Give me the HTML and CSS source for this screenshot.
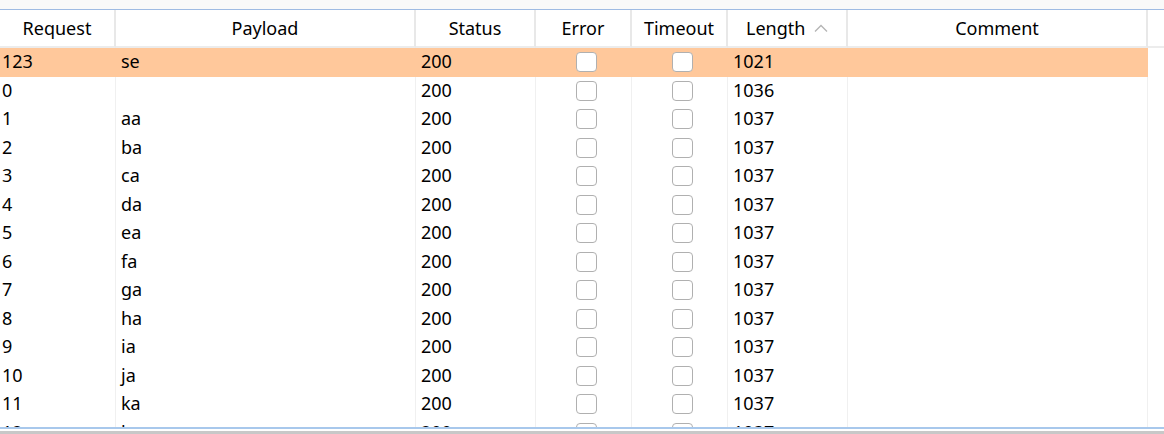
FILE: index.html
```html
<!DOCTYPE html>
<html lang="en">
<head>
    <meta charset="UTF-8">
    <title>Intruder Results</title>
    <link rel="stylesheet" href="styles.css">
</head>
<body>
    <div class="topbar"></div>

    <div class="results">
        <div class="row head">
            <div class="cell">Request</div>
            <div class="cell">Payload</div>
            <div class="cell">Status</div>
            <div class="cell">Error</div>
            <div class="cell">Timeout</div>
            <div class="cell">Length
                <svg class="sort" width="14" height="8" viewBox="0 0 14 8"><polyline points="1,7.5 7,1.5 13,7.5" fill="none" stroke="#b4b4b4" stroke-width="1.3"/></svg>
            </div>
            <div class="cell">Comment</div>
            <div class="cell blank"></div>
        </div>

        <div class="row sel">
            <div class="cell first">123</div><div class="cell">se</div><div class="cell">200</div>
            <div class="cell check"><span class="box"></span></div><div class="cell check"><span class="box"></span></div>
            <div class="cell">1021</div><div class="cell"></div><div class="cell blank"></div>
        </div>
        <div class="row">
            <div class="cell first">0</div><div class="cell"></div><div class="cell">200</div>
            <div class="cell check"><span class="box"></span></div><div class="cell check"><span class="box"></span></div>
            <div class="cell">1036</div><div class="cell"></div><div class="cell blank"></div>
        </div>
        <div class="row">
            <div class="cell first">1</div><div class="cell">aa</div><div class="cell">200</div>
            <div class="cell check"><span class="box"></span></div><div class="cell check"><span class="box"></span></div>
            <div class="cell">1037</div><div class="cell"></div><div class="cell blank"></div>
        </div>
        <div class="row">
            <div class="cell first">2</div><div class="cell">ba</div><div class="cell">200</div>
            <div class="cell check"><span class="box"></span></div><div class="cell check"><span class="box"></span></div>
            <div class="cell">1037</div><div class="cell"></div><div class="cell blank"></div>
        </div>
        <div class="row">
            <div class="cell first">3</div><div class="cell">ca</div><div class="cell">200</div>
            <div class="cell check"><span class="box"></span></div><div class="cell check"><span class="box"></span></div>
            <div class="cell">1037</div><div class="cell"></div><div class="cell blank"></div>
        </div>
        <div class="row">
            <div class="cell first">4</div><div class="cell">da</div><div class="cell">200</div>
            <div class="cell check"><span class="box"></span></div><div class="cell check"><span class="box"></span></div>
            <div class="cell">1037</div><div class="cell"></div><div class="cell blank"></div>
        </div>
        <div class="row">
            <div class="cell first">5</div><div class="cell">ea</div><div class="cell">200</div>
            <div class="cell check"><span class="box"></span></div><div class="cell check"><span class="box"></span></div>
            <div class="cell">1037</div><div class="cell"></div><div class="cell blank"></div>
        </div>
        <div class="row">
            <div class="cell first">6</div><div class="cell">fa</div><div class="cell">200</div>
            <div class="cell check"><span class="box"></span></div><div class="cell check"><span class="box"></span></div>
            <div class="cell">1037</div><div class="cell"></div><div class="cell blank"></div>
        </div>
        <div class="row">
            <div class="cell first">7</div><div class="cell">ga</div><div class="cell">200</div>
            <div class="cell check"><span class="box"></span></div><div class="cell check"><span class="box"></span></div>
            <div class="cell">1037</div><div class="cell"></div><div class="cell blank"></div>
        </div>
        <div class="row">
            <div class="cell first">8</div><div class="cell">ha</div><div class="cell">200</div>
            <div class="cell check"><span class="box"></span></div><div class="cell check"><span class="box"></span></div>
            <div class="cell">1037</div><div class="cell"></div><div class="cell blank"></div>
        </div>
        <div class="row">
            <div class="cell first">9</div><div class="cell">ia</div><div class="cell">200</div>
            <div class="cell check"><span class="box"></span></div><div class="cell check"><span class="box"></span></div>
            <div class="cell">1037</div><div class="cell"></div><div class="cell blank"></div>
        </div>
        <div class="row">
            <div class="cell first">10</div><div class="cell">ja</div><div class="cell">200</div>
            <div class="cell check"><span class="box"></span></div><div class="cell check"><span class="box"></span></div>
            <div class="cell">1037</div><div class="cell"></div><div class="cell blank"></div>
        </div>
        <div class="row">
            <div class="cell first">11</div><div class="cell">ka</div><div class="cell">200</div>
            <div class="cell check"><span class="box"></span></div><div class="cell check"><span class="box"></span></div>
            <div class="cell">1037</div><div class="cell"></div><div class="cell blank"></div>
        </div>
        <div class="row">
            <div class="cell first">12</div><div class="cell">la</div><div class="cell">200</div>
            <div class="cell check"><span class="box"></span></div><div class="cell check"><span class="box"></span></div>
            <div class="cell">1037</div><div class="cell"></div><div class="cell blank"></div>
        </div>
    </div>

    <div class="bottombar"></div>
</body>
</html>
```

FILE: styles.css
```css
body {
    margin: 0;
    font-family: "Noto Sans", "Open Sans", sans-serif;
    font-size: 18px;
    color: #000;
    background: #f0f0f0;
    height: 434px;
    overflow: hidden;
}
.topbar {
    height: 9px;
    background: #f9f9f9;
    border-bottom: 1px solid #9fbbe3;
}
.results {
    height: 417px;
    overflow: hidden;
    background: #fff;
}
.row {
    display: grid;
    grid-template-columns: 116px 300px 120px 96px 96px 120px 300px 16px;
    height: 28.5px;
}
.cell {
    box-sizing: border-box;
    border-right: 1px solid #f0f0f0;
    padding: 1px 0 0 5px;
    line-height: 24px;
    white-space: nowrap;
    overflow: hidden;
}
.cell.first {
    padding-left: 2px;
}
.cell.blank {
    border-right: none;
}
.row.head {
    height: 38px;
}
.head .cell {
    height: 38px;
    padding: 6px 0 0 0;
    text-align: center;
    border-right: 2px solid #e8e8e8;
    border-bottom: 2px solid #ececec;
}
.head .cell.blank {
    border-right: none;
}
.sort {
    margin-left: 4px;
    vertical-align: 3px;
}
.row.sel .cell:not(.blank) {
    background: #ffc89b;
    border-right-color: #ffc89b;
}
.cell.check {
    display: flex;
    justify-content: center;
    align-items: flex-start;
    padding-top: 4px;
}
.box {
    box-sizing: border-box;
    width: 21px;
    height: 20px;
    border: 1.5px solid #b0b0b0;
    border-radius: 4px;
    background: #fff;
}
.bottombar {
    height: 2px;
    background: #a8c8ec;
    border-bottom: 2px solid #fff;
    box-shadow: 0 3px 0 #c8c8c8;
}
```
